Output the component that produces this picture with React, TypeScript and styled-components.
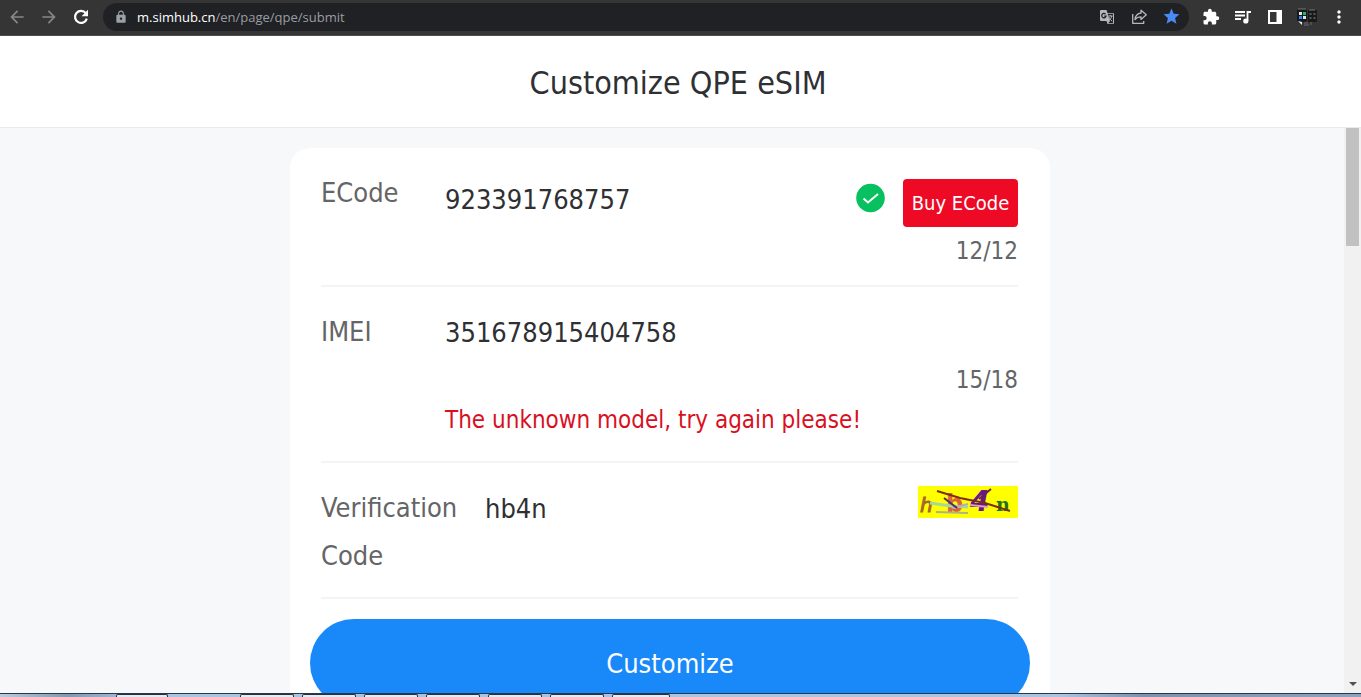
import React from "react";
import styled, { createGlobalStyle } from "styled-components";
import {
  MdArrowBack,
  MdArrowForward,
  MdLock,
  MdExtension,
  MdStar,
  MdMoreVert,
} from "react-icons/md";

const GlobalStyle = createGlobalStyle`
  *, *::before, *::after { box-sizing: border-box; }
  body {
    margin: 0;
    background: #f7f8fa;
    color: #2f3033;
    font-family: Tahoma, "DejaVu Sans Condensed", "Noto Sans", sans-serif;
  }
  button, input { font: inherit; color: inherit; }
`;

const Screen = styled.div`
  display: flex;
  flex-direction: column;
  height: 100vh;
  overflow: hidden;
`;

const Toolbar = styled.nav`
  display: flex;
  align-items: center;
  flex: none;
  height: 36px;
  padding: 0 6px 2px;
  background: #353535;
  border-bottom: 1px solid #4c4c4c;
`;

const IconButton = styled.button<{ $tone?: string }>`
  display: flex;
  align-items: center;
  justify-content: center;
  flex: none;
  width: 32px;
  height: 28px;
  padding: 0;
  border: 0;
  background: none;
  color: ${(p) => p.$tone ?? "#ffffff"};
`;

const NavGroup = styled.div`
  display: flex;
  margin-left: -5px;
`;

const AddressBar = styled.div`
  display: flex;
  align-items: center;
  flex: 1;
  height: 28px;
  margin: 0 6px;
  padding: 0 2px 0 11px;
  border-radius: 14px;
  background: #202124;
  color: #9aa0a6;
`;

const Address = styled.a`
  flex: 1;
  margin-left: 9px;
  color: #9a9da1;
  font: 13px/20px "Open Sans", "Noto Sans", sans-serif;
  text-decoration: none;
`;

const Host = styled.span`
  color: #ffffff;
`;

const Header = styled.header`
  flex: none;
  padding: 23px 5px 20px 0;
  background: #ffffff;
  border-bottom: 1px solid #e9eaec;
  text-align: center;
`;

const Title = styled.h1`
  margin: 0;
  font-size: 32px;
  font-weight: 400;
  line-height: 48px;
`;

const Viewport = styled.div`
  display: flex;
  flex: 1;
  min-height: 0;
`;

const Content = styled.main`
  flex: 1;
  overflow: hidden;
  padding: 20px 4px 0 0;
`;

const Card = styled.form`
  max-width: 760px;
  margin: 0 auto;
  padding-bottom: 40px;
  border-radius: 20px;
  background: #ffffff;
`;

const Row = styled.div`
  display: flex;
  margin: 0 32px 0 31px;
  padding: 21px 0 17px;
  border-bottom: 2px solid #f4f4f6;
`;

const Label = styled.label<{ $wide?: boolean }>`
  flex: none;
  width: ${(p) => (p.$wide ? 164 : 124)}px;
  color: #646566;
  font-size: 27px;
  line-height: 48px;
`;

const Field = styled.div<{ $inset?: boolean }>`
  flex: 1;
  min-width: 0;
  padding-top: ${(p) => (p.$inset ? 10 : 0)}px;
  margin-bottom: ${(p) => (p.$inset ? -7 : 0)}px;
`;

const FieldLine = styled.div`
  display: flex;
  align-items: flex-start;
`;

const TextInput = styled.input<{ $short?: boolean }>`
  flex: 1;
  min-width: 0;
  height: ${(p) => (p.$short ? 40 : 48)}px;
  padding: 0;
  border: 0;
  outline: 0;
  background: none;
  font-size: 27px;
`;

const ValidMark = styled.svg`
  width: 30px;
  height: 30px;
  margin: 4px 17px 0 0;
`;

const BuyButton = styled.button`
  width: 115px;
  height: 48px;
  padding: 0;
  border: 0;
  border-radius: 4px;
  background: #ee0a24;
  color: #ffffff;
  font-size: 20px;
`;

const Counter = styled.div`
  color: #646566;
  font-size: 24px;
  line-height: 48px;
  text-align: right;
`;

const ErrorText = styled.p`
  margin: -8px 0 0;
  color: #d9101f;
  font-size: 24px;
  line-height: 48px;
`;

const CaptchaButton = styled.button`
  display: block;
  width: 100px;
  height: 32px;
  margin-top: 2px;
  padding: 0;
  border: 0;
  background: #ffff00;
`;

const SubmitButton = styled.button`
  display: block;
  width: calc(100% - 40px);
  height: 88px;
  margin: 20px auto 0;
  border: 0;
  border-radius: 44px;
  background: #1989fa;
  color: #ffffff;
  font-size: 27px;
`;

const ScrollTrack = styled.div`
  display: flex;
  flex-direction: column;
  justify-content: space-between;
  align-items: center;
  flex: none;
  width: 17px;
  padding-bottom: 6px;
  background: #f1f1f1;
`;

const ScrollThumb = styled.div`
  width: 13px;
  height: 118px;
  background: #c1c1c1;
`;

const Taskbar = styled.footer`
  display: flex;
  gap: 8px;
  flex: none;
  height: 4px;
  padding-left: 116px;
  border-top: 1px solid #27384c;
  background: linear-gradient(90deg, #b9cbe0 0, #8397b0 5%, #a9c3e2 10%, #a9c3e2 78%, #7c92ae 84%, #8da3bd 100%);
`;

const Task = styled.div<{ $width: number; $gap?: number }>`
  width: ${(p) => p.$width}px;
  margin-right: ${(p) => p.$gap ?? 0}px;
  border: 1px solid #26323f;
  border-bottom: 0;
  border-radius: 2px 2px 0 0;
  background: #e3ecf5;
`;

const ReloadIcon = () => (
  <svg width="16" height="16" viewBox="0 0 16 16" fill="none">
    <path d="M12.800 4.200A6 6 0 1 0 13.800 9.600" stroke="#fff" strokeWidth="2.200" />
    <path d="M15 .800V7.200H8.600z" fill="#fff" />
  </svg>
);

const TranslateIcon = () => (
  <svg width="16" height="16" viewBox="0 0 16 16" fill="none">
    <path d="M2 1h5.500l1 3H14a1 1 0 0 1 1 1v9a1 1 0 0 1-1 1H8.500l-1-3H2a1 1 0 0 1-1-1V2a1 1 0 0 1 1-1z" fill="#b5b7ba" />
    <path d="M8.600 4.800H14v9.400H9l2-2z" fill="#202124" />
    <path d="M9.200 7h4.400M11.400 6v1M12.800 7c-.4 2-1.600 3.400-3 4.200M10 8.200c.6 1.600 1.800 3 3.200 4" stroke="#b5b7ba" />
    <path d="M6.600 5.200a2.200 2.200 0 1 0 .5 2H5.200" stroke="#202124" strokeWidth="1.200" />
  </svg>
);

const ShareIcon = () => (
  <svg width="17" height="17" viewBox="0 0 17 17" fill="none" stroke="#b5b7ba" strokeWidth="1.300" strokeLinejoin="round">
    <path d="M1.700 6v9.300h11V13" />
    <path d="M10 2.200l5.300 4.600L10 11.400V8.800c-2.700 0-4.500.8-6 2.700.4-3.600 2.400-6 6-6.500z" />
  </svg>
);

const MediaIcon = () => (
  <svg width="18" height="16" viewBox="0 0 18 16" fill="none" stroke="#fff" strokeWidth="1.800">
    <path d="M1 3h10M1 6.500h10M1 10h6M13.500 12V3H17" />
    <circle cx="11.800" cy="12" r="1.700" fill="#fff" />
  </svg>
);

const SidePanelIcon = () => (
  <svg width="14" height="14" viewBox="0 0 14 14">
    <path fill="#fff" fillRule="evenodd" d="M0 0h14v14H0zM2 2v10h6.500V2z" />
  </svg>
);

const AvatarIcon = () => (
  <svg width="20" height="18" viewBox="0 0 20 18">
    <rect x="0" y="1" width="10" height="13" rx="2" fill="#17191d" />
    <rect x="11" y="2" width="9" height="12" rx="1" fill="#17191d" />
    <path d="M1 1h8M12 2h6" stroke="#777" />
    <rect x="2" y="4" width="3" height="3" fill="#e8e8e8" />
    <rect x="6" y="4" width="3" height="3" fill="#22b573" />
    <rect x="2" y="8" width="3" height="3" fill="#2e83e8" />
    <rect x="6" y="8" width="3" height="3" fill="#dfe6ef" />
    <path d="M12.500 6h2M16.500 6h2M12.500 10h2M16.500 10h2" stroke="#55585d" strokeWidth="2" />
    <path d="M1 13l4 1v3z" fill="#eee" />
    <path d="M7 15h4M7 17h5M14 14v3" stroke="#77696f" />
  </svg>
);

const CaptchaDrawing = () => (
  <svg width="100" height="32" viewBox="0 0 100 32" fill="none" role="img" aria-label="hb4n">
    <g fontFamily='"DejaVu Sans", sans-serif' fontWeight="700">
      <text x="2" y="26" fontSize="20" fontStyle="italic" fontWeight="400" stroke="#a5652f" fill="#a5652f">h</text>
      <text x="28" y="26" fontSize="24" fill="#dd633d">b</text>
      <text x="52" y="25" fontSize="28" fontStyle="italic" fill="#6b168c">4</text>
      <text x="78" y="25" fontSize="19" fontFamily='"DejaVu Serif", serif' fill="#1d741d">n</text>
    </g>
    <path d="M12 17l21 3 17 1" stroke="#a5d99c" strokeWidth="3" />
    <path d="M18 26l32 1" stroke="#aab48c" strokeWidth="2" />
    <path d="M34 22l16-4" stroke="#bfa5bb" strokeWidth="2" />
    <path d="M52 19l18 2" stroke="#d7a6b2" strokeWidth="2" />
    <path d="M19 5l23 7 25 5 25 8" stroke="#7d2d12" strokeWidth="2" />
    <path d="M26 12l13 10" stroke="#463261" strokeWidth="2" />
    <path d="M61 13l12-10" stroke="#65215f" strokeWidth="2" />
  </svg>
);

export default function App() {
  return (
    <>
      <GlobalStyle />
      <Screen>
        <Toolbar aria-label="Browser">
          <NavGroup>
            <IconButton $tone="#85878a" aria-label="Back"><MdArrowBack size={20} /></IconButton>
            <IconButton $tone="#85878a" aria-label="Forward"><MdArrowForward size={20} /></IconButton>
            <IconButton aria-label="Reload"><ReloadIcon /></IconButton>
          </NavGroup>
          <AddressBar>
            <MdLock size={14} />
            <Address href="#submit"><Host>m.simhub.cn</Host>/en/page/qpe/submit</Address>
            <IconButton aria-label="Translate"><TranslateIcon /></IconButton>
            <IconButton aria-label="Share"><ShareIcon /></IconButton>
            <IconButton $tone="#4a8af4" aria-label="Bookmark"><MdStar size={19} /></IconButton>
          </AddressBar>
          <IconButton aria-label="Extensions"><MdExtension size={18} /></IconButton>
          <IconButton aria-label="Media"><MediaIcon /></IconButton>
          <IconButton aria-label="Side panel"><SidePanelIcon /></IconButton>
          <IconButton aria-label="Profile"><AvatarIcon /></IconButton>
          <IconButton aria-label="Menu"><MdMoreVert size={20} /></IconButton>
        </Toolbar>

        <Header>
          <Title>Customize QPE eSIM</Title>
        </Header>

        <Viewport>
          <Content>
            <Card onSubmit={(e: React.FormEvent) => e.preventDefault()}>
              <Row>
                <Label htmlFor="ecode">ECode</Label>
                <Field $inset>
                  <FieldLine>
                    <TextInput $short id="ecode" defaultValue="923391768757" maxLength={12} />
                    <ValidMark viewBox="0 0 30 30" fill="none" aria-hidden="true">
                      <circle cx="14.500" cy="15" r="14.300" fill="#07c160" />
                      <path d="M7.500 15.500l4.500 4L22 11" stroke="#fff" strokeWidth="2" />
                    </ValidMark>
                    <BuyButton type="button">Buy ECode</BuyButton>
                  </FieldLine>
                  <Counter>12/12</Counter>
                </Field>
              </Row>
              <Row>
                <Label htmlFor="imei">IMEI</Label>
                <Field>
                  <FieldLine>
                    <TextInput id="imei" defaultValue="351678915404758" maxLength={18} />
                  </FieldLine>
                  <Counter>15/18</Counter>
                  <ErrorText role="alert">The unknown model, try again please!</ErrorText>
                </Field>
              </Row>
              <Row>
                <Label $wide htmlFor="code">Verification Code</Label>
                <Field>
                  <FieldLine>
                    <TextInput id="code" defaultValue="hb4n" />
                    <CaptchaButton type="button" aria-label="Refresh code"><CaptchaDrawing /></CaptchaButton>
                  </FieldLine>
                </Field>
              </Row>
              <SubmitButton type="submit">Customize</SubmitButton>
            </Card>
          </Content>
          <ScrollTrack>
            <ScrollThumb />
            <svg width="8" height="5" viewBox="0 0 8 5" aria-hidden="true"><path d="M0 0h8L4 4z" fill="#505050" /></svg>
          </ScrollTrack>
        </Viewport>

        <Taskbar>
          <Task $width={52} $gap={64} />
          <Task $width={54} />
          <Task $width={54} />
          <Task $width={54} />
          <Task $width={54} />
          <Task $width={54} />
          <Task $width={54} />
          <Task $width={58} />
        </Taskbar>
      </Screen>
    </>
  );
}
